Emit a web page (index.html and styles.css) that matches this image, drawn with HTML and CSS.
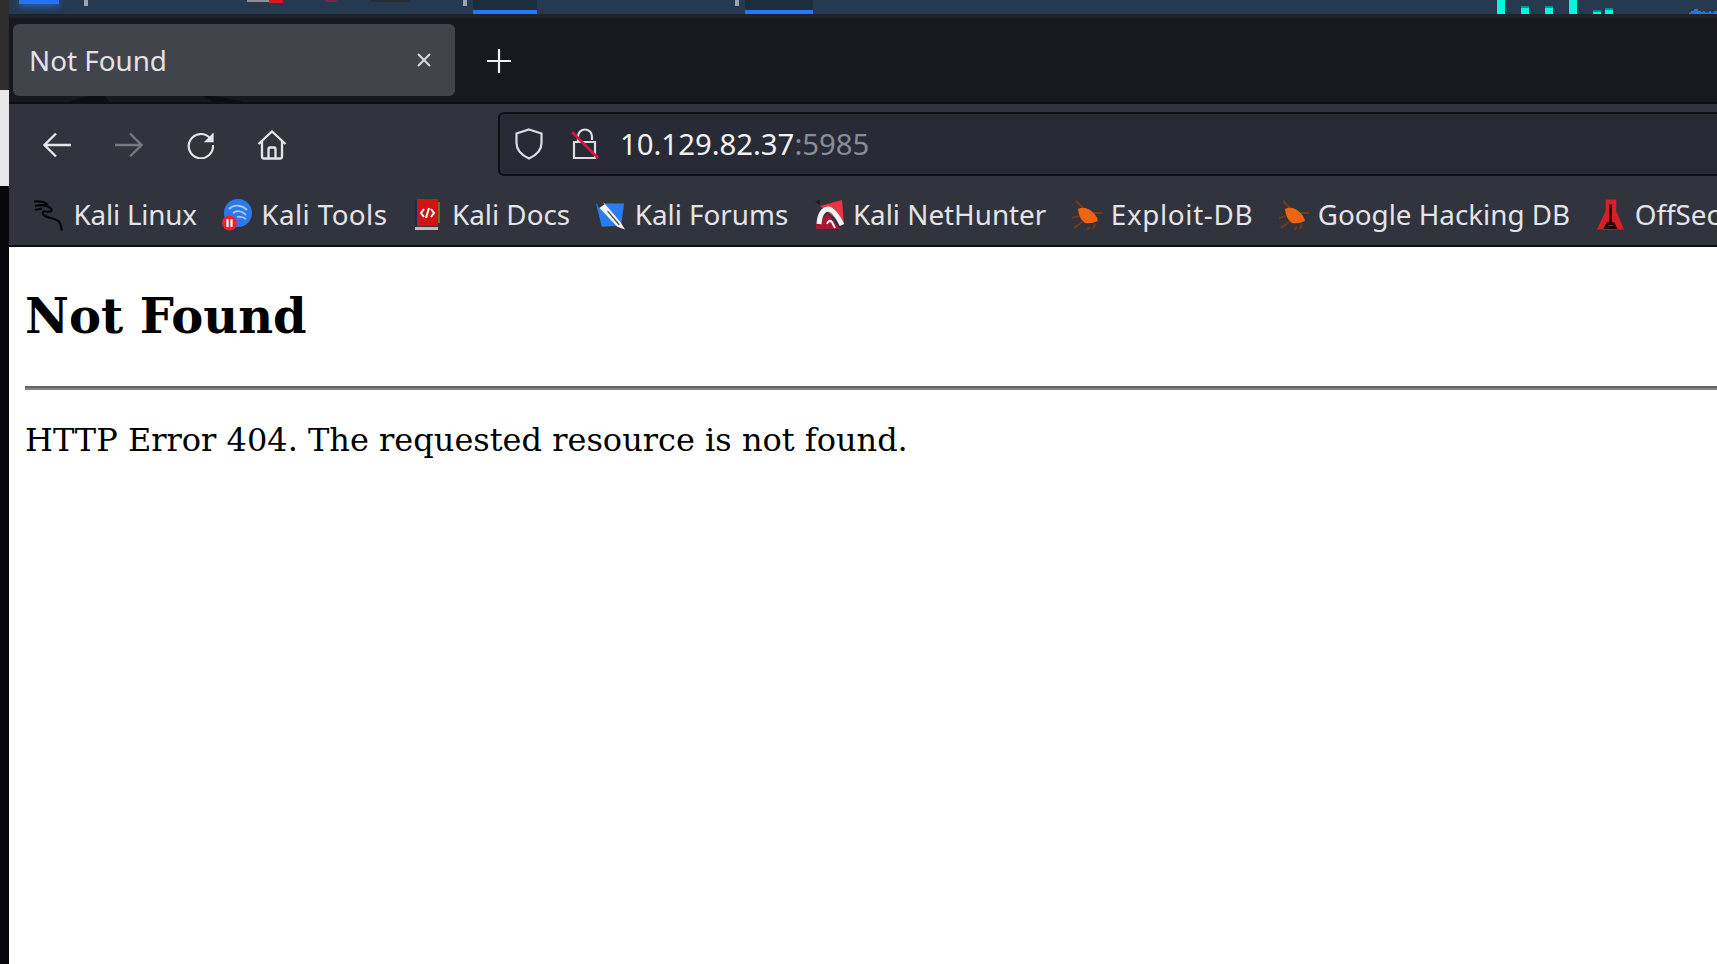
FILE: index.html
```html
<!DOCTYPE html>
<html lang="en">
<head>
<meta charset="utf-8">
<title>Not Found</title>
<link rel="stylesheet" href="styles.css">
</head>
<body>
<div class="screen">
  <aside class="edge">
    <div class="edge-dark"></div>
    <div class="edge-light"></div>
    <div class="edge-black"></div>
  </aside>
  <div class="window">
    <div class="panel">
      <span class="p-active"></span>
      <span class="p-sep"></span>
      <span class="p-grey"></span>
      <span class="p-red"></span>
      <span class="p-maroon"></span>
      <span class="p-dark"></span>
      <span class="p-sep p-sep-b"></span>
      <span class="p-task"></span>
      <span class="p-sep p-sep-c"></span>
      <span class="p-task p-task-b"></span>
      <div class="meter">
        <i class="bar h14"></i><i class="bar h8"></i><i class="bar h8"></i><i class="bar h14"></i><i class="bar h2"></i><i class="bar h4 near"></i>
      </div>
      <svg class="graph" viewBox="0 0 28 6" aria-hidden="true"><path d="M0 6V4.500H2V3H5V1H9V3H12V4H14V3H16V4.500H20V3H22V4.500H25V3H28V6Z" fill="#2a72f5"/></svg>
    </div>
    <div class="tabbar">
      <svg class="wallpaper" viewBox="0 0 260 8" aria-hidden="true"><path d="M60 8Q75 2 95 0L100 8ZM190 0Q215 3 235 8H205Z" fill="#0d0e11"/></svg>
      <div class="tab">
        <span class="tab-title">Not Found</span>
        <svg class="tab-close" viewBox="0 0 16 16" aria-hidden="true"><path d="M2 2L14 14M14 2L2 14" stroke="#d9d9dc" stroke-width="2" fill="none"/></svg>
      </div>
      <svg class="tab-new" viewBox="0 0 26 26" aria-hidden="true"><path d="M13 1V25M1 13H25" stroke="#f1f1f1" stroke-width="2.200" fill="none"/></svg>
    </div>
    <div class="toolbar">
      <div class="navrow">
        <button class="nav"><svg viewBox="0 0 28 28" aria-hidden="true"><path d="M28 14H2M13 2.500L1.500 14L13 25.500" class="st"/></svg></button>
        <button class="nav off"><svg viewBox="0 0 28 28" aria-hidden="true"><path d="M0 14H26M15 2.500L26.500 14L15 25.500" class="st"/></svg></button>
        <button class="nav"><svg viewBox="0 0 30 30" aria-hidden="true"><path d="M24.500 7.500A13 13 0 1 0 27.800 15" class="st"/><path d="M28.500 1.500V12H18Z" fill="#e6e6e8"/></svg></button>
        <button class="nav home"><svg viewBox="0 0 30 30" aria-hidden="true"><path d="M1.500 14L15 1.500L28.500 14M5 11V26.500Q5 28.500 7 28.500H23Q25 28.500 25 26.500V11M11.500 28.500V19Q11.500 17.500 13 17.500H17Q18.500 17.500 18.500 19V28.500" class="st"/></svg></button>
        <div class="urlbar">
          <svg class="shield" viewBox="0 0 28 32" aria-hidden="true"><path d="M14 1.500L26.500 5.500V15Q26.500 25 14 30.500Q1.500 25 1.500 15V5.500Z" fill="none" stroke="#dcdcdf" stroke-width="2.200"/></svg>
          <svg class="lock" viewBox="0 0 28 32" aria-hidden="true"><path d="M7 14V8.500A7 7 0 0 1 21 8.500V12M3 14H24V30H3Z" fill="none" stroke="#dcdcdf" stroke-width="2.200"/><path d="M1 4L27 30" stroke="#e0103f" stroke-width="2.600"/></svg>
          <span class="url"><span class="host">10.129.82.37</span><span class="port">:5985</span></span>
        </div>
      </div>
      <div class="bookmarks">
        <a class="bm"><span class="ico"><svg class="i-kali" viewBox="0 0 32 32" aria-hidden="true"><path d="M1 2.500C6 2 11 2 15 6M2 7C8 5.500 14 6 18 9.500C20 12 17 13.500 13 12.500C9 12 8.500 15 12 17C17 20 24 19 27 24C28 27 28 29 29 31.500M2 11L9 9.500" fill="none" stroke="#060608" stroke-width="2.200"/></svg></span><span class="lbl ls-tight">Kali Linux</span></a>
        <a class="bm"><span class="ico"><svg class="i-tools" viewBox="0 0 30 32" aria-hidden="true"><circle cx="16" cy="14" r="14" fill="#2b79ef"/><path d="M7 10C12 5 20 6 25 11M11 14C15 11 20 12 24 16M15 18C18 17 21 18 24 20" stroke="#a9c8f4" stroke-width="1.800" fill="none"/><circle cx="7.500" cy="24" r="7.500" fill="#ef2130"/><path d="M5.500 20V28M9.500 20V28" stroke="#fff" stroke-width="2.200"/></svg></span><span class="lbl ls-wide">Kali Tools</span></a>
        <a class="bm"><span class="ico"><svg class="i-docs" viewBox="0 0 25 32" aria-hidden="true"><path d="M2 0H23V27H2Z" fill="#cf1414"/><path d="M0 1H2V28H0Z" fill="#23265c"/><path d="M23 3H25V24H23Z" fill="#7a6a28"/><path d="M0 28H23V31H0Z" fill="#cdb8b8"/><path d="M9 10L6 14L9 18M16 10L19 14L16 18M14 9L11 19" stroke="#fff" stroke-width="2" fill="none"/></svg></span><span class="lbl">Kali Docs</span></a>
        <a class="bm"><span class="ico"><svg class="i-forums" viewBox="0 0 32 32" aria-hidden="true"><path d="M1 4H30L27 27L7 28Z" fill="#2a7df0"/><path d="M3 7L9 3L26 23L31 31L23 28Z" fill="#f4f4f6"/><path d="M1 2L6 0L10 5L4 9Z" fill="#33353c"/><path d="M13 12L25 26" stroke="#4a4e57" stroke-width="1.400"/></svg></span><span class="lbl">Kali Forums</span></a>
        <a class="bm"><span class="ico"><svg class="i-hunter" viewBox="0 0 30 32" aria-hidden="true"><path d="M6 7L28 1L30 26Z" fill="#ef3340"/><path d="M1 2L6 1L6 6Z" fill="#1c1d22"/><path d="M2 30V24L14 15L26 30Z" fill="#a81735"/><path d="M5 25Q6 11 14 10Q20 10 28 26" stroke="#f3f3f4" stroke-width="5" fill="none"/><path d="M13 25Q15 20 18 23L21 29" stroke="#f3f3f4" stroke-width="2" fill="none"/></svg></span><span class="lbl">Kali NetHunter</span></a>
        <a class="bm"><span class="ico"><svg class="i-bug" viewBox="0 0 30 30" aria-hidden="true"><path d="M4 1L11 8M2 28L10 22M0 18L7 16M23 24L21 29M18 27L15 30M22 13L30 13" stroke="#7a3a10" stroke-width="1.800"/><path d="M6 9Q12 6 18 10Q25 15 26 21Q20 24 13 23Q7 19 6 9Z" fill="#ee6410"/></svg></span><span class="lbl ls-wider">Exploit-DB</span></a>
        <a class="bm"><span class="ico"><svg class="i-bug" viewBox="0 0 30 30" aria-hidden="true"><path d="M4 1L11 8M2 28L10 22M0 18L7 16M23 24L21 29M18 27L15 30M22 13L30 13" stroke="#7a3a10" stroke-width="1.800"/><path d="M6 9Q12 6 18 10Q25 15 26 21Q20 24 13 23Q7 19 6 9Z" fill="#ee6410"/></svg></span><span class="lbl">Google Hacking DB</span></a>
        <a class="bm"><span class="ico"><svg class="i-off" viewBox="0 0 28 32" aria-hidden="true"><path d="M9 0H20V12L28 31H0L9 12Z" fill="#d81f26"/><path d="M14 5V24M11 25H17L19 29H9Z" stroke="#220507" stroke-width="3" fill="none"/></svg></span><span class="lbl">OffSec</span></a>
      </div>
    </div>
    <main class="page">
      <h1 class="err-title">Not Found</h1>
      <hr class="rule">
      <p class="err-text">HTTP Error 404. The requested resource is not found.</p>
    </main>
  </div>
</div>
</body>
</html>
```
FILE: styles.css
```css
* { box-sizing: border-box; }
html, body { margin: 0; height: 100%; overflow: hidden; background: #fff; }
.screen { display: flex; width: 1717px; height: 964px; overflow: hidden; }

.edge { flex: 0 0 9px; display: flex; flex-direction: column; }
.edge-dark { height: 90px; background: #2d2d2e; }
.edge-light { height: 96px; background: #e6e6e6; }
.edge-black { flex: 1; background: #08080c; }

.window { flex: 1; min-width: 0; display: flex; flex-direction: column; }

.panel { position: relative; flex: 0 0 18px; background: #26394f; border-bottom: 4px solid #1f2329; overflow: hidden; }
.panel span, .meter, .graph { position: absolute; top: 0; }
.p-active { left: 10px; width: 40px; height: 4px; background: #2a72f5; box-shadow: 0 2px 6px #2a72f5; }
.p-sep { left: 75px; width: 4px; height: 6px; background: #9ba5af; }
.p-sep-b { left: 454px; }
.p-sep-c { left: 726px; }
.p-grey { left: 238px; width: 22px; height: 2px; background: #8d8f94; }
.p-red { left: 260px; width: 14px; height: 3px; background: #d81620; }
.p-maroon { left: 316px; width: 12px; height: 2px; background: #7b2546; }
.p-dark { left: 362px; width: 39px; height: 2px; background: #2a2d33; }
.p-task { left: 464px; width: 64px; height: 14px; background: #1c2d3e; border-bottom: 4px solid #2a75ff; }
.p-task-b { left: 736px; width: 68px; }
.meter { left: 1488px; height: 14px; display: flex; gap: 16px; align-items: flex-end; }
.bar { width: 8px; background: #00f8dc; }
.near { margin-left: -12px; }
.h14 { height: 14px; }
.h8 { height: 8px; border-top: 2px solid #0b8f88; }
.h4 { height: 6px; border-top: 2px solid #0b8f88; }
.h2 { height: 4px; border-top: 2px solid #0b8f88; }
.graph { left: 1680px; top: 8px; width: 28px; height: 6px; }

.tabbar { position: relative; flex: 0 0 86px; display: flex; align-items: flex-start; background: #18191e; border-bottom: 2px solid #0e0f12; padding: 6px 0 0 4px; }
.wallpaper { position: absolute; left: 0; top: 76px; width: 260px; height: 8px; }
.tab { position: relative; flex: 0 0 442px; height: 72px; display: flex; align-items: center; justify-content: space-between; padding: 2px 23px 0 16px; background: #42444c; border-radius: 6px; }
.tab-title { font: 27.800px/1 "Noto Sans", sans-serif; color: #e2e2e6; }
.tab-close { width: 16px; height: 16px; margin-top: -2px; }
.tab-new { width: 26px; height: 26px; margin: 24px 0 0 31px; }

.toolbar { flex: 0 0 143px; background: #32343d; display: flex; flex-direction: column; }
.navrow { flex: 0 0 80px; display: flex; align-items: flex-start; padding: 8px 0 0 12px; }
.nav { flex: 0 0 72px; height: 66px; padding: 0; border: 0; background: none; display: flex; justify-content: center; align-items: center; }
.nav svg { width: 28px; height: 28px; }
.nav.home { flex-basis: 70px; }
.nav.home svg { width: 30px; height: 30px; }
.st { fill: none; stroke: #e6e6e8; stroke-width: 2.300; }
.nav.off .st { stroke: #77797f; }
.urlbar { flex: 1; height: 64px; margin-left: 191px; display: flex; align-items: center; padding-left: 15px; background: #282a36; border: 2px solid #0f1014; border-right: 0; border-radius: 6px 0 0 6px; }
.shield { width: 28px; height: 32px; flex: none; }
.lock { width: 28px; height: 32px; flex: none; margin-left: 28px; }
.url { margin: 2px 0 0 21px; font: 29.300px/1 "Noto Sans", sans-serif; }
.host { color: #f2f2f4; }
.port { color: #8b8d94; }

.bookmarks { flex: 1; display: flex; align-items: center; gap: 25px; padding: 0 0 0 24px; white-space: nowrap; overflow: hidden; border-bottom: 2px solid #0e0f12; }
.bm { display: flex; align-items: center; gap: 8.600px; flex: none; color: #e4e4e8; font: 27.800px/1 "Noto Sans", sans-serif; }
.ls-tight { letter-spacing: -0.2px; }
.ls-wide { letter-spacing: 0.4px; }
.ls-wider { letter-spacing: 0.65px; }
.ico { flex: 0 0 31px; height: 32px; display: flex; justify-content: center; align-items: center; }
.ico svg { display: block; flex: none; }
.i-kali { width: 32px; height: 32px; }
.i-tools { width: 30px; height: 32px; }
.i-docs { width: 25px; height: 32px; }
.i-forums { width: 31px; height: 32px; }
.i-hunter { width: 30px; height: 32px; }
.i-bug { width: 30px; height: 30px; }
.i-off { width: 27px; height: 32px; }

.page { flex: 1; min-height: 0; background: #fff; padding: 0 0 0 16px; color: #000; font-family: "DejaVu Serif", serif; }
.err-title { margin: 0; padding-top: 42px; font-size: 48px; line-height: 54px; font-weight: 700; }
.rule { height: 4px; margin: 43px 0 0; border: 0; border-top: 2px solid #646464; border-bottom: 2px solid #858585; }
.err-text { margin: 30px 0 0; font-size: 32px; line-height: 40px; }
```
